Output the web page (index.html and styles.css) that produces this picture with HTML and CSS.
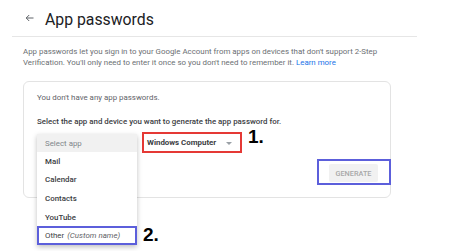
FILE: index.html
```html
<!DOCTYPE html>
<html lang="en">
<head>
    <meta charset="UTF-8">
    <title>App passwords</title>
    <link rel="stylesheet" href="styles.css">
</head>
<body>
    <div class="page">
        <header class="top">
            <svg class="back" width="9" height="8" viewBox="0 0 9 8">
                <path d="M8.5 4H1.2M4.2 1L1.2 4l3 3" fill="none" stroke="#5f6368" stroke-width="1"/>
            </svg>
            <h1>App passwords</h1>
        </header>

        <p class="intro">App passwords let you sign in to your Google Account from apps on devices that don't support 2-Step Verification. You'll only need to enter it once so you don't need to remember it. <a href="#">Learn more</a></p>

        <section class="card">
            <p class="empty">You don't have any app passwords.</p>
            <p class="prompt">Select the app and device you want to generate the app password for.</p>

            <div class="pickers">
                <div class="picker">Select app</div>
                <div class="picker device">
                    Windows Computer
                    <span class="caret"></span>
                </div>
                <span class="note">1.</span>
            </div>

            <div class="actions">
                <div class="mark-blue">
                    <button class="generate">GENERATE</button>
                </div>
            </div>

            <ul class="menu">
                <li class="placeholder">Select app</li>
                <li>Mail</li>
                <li>Calendar</li>
                <li>Contacts</li>
                <li>YouTube</li>
                <li class="picked">Other <em>(Custom name)</em><span class="note note-two">2.</span></li>
            </ul>
        </section>
    </div>
</body>
</html>
```

FILE: styles.css
```css
html, body {
    min-height: 251px;
}

body {
    margin: 0;
    font-family: Roboto, "Liberation Sans", sans-serif;
    background-color: #fff;
    color: #3c4043;
}

.page {
    width: 405px;
    min-height: 251px;
    margin-left: 12px;
}

.top {
    display: flex;
    align-items: center;
    height: 36px;
    border-bottom: 1px solid #e6e6e6;
}

.back {
    margin-left: 13px;
    margin-right: 11px;
}

.top h1 {
    margin: 0;
    font-size: 15.8px;
    font-weight: 400;
    color: #202124;
    padding-top: 2px;
}

.intro {
    margin: 10px 0 0 11px;
    width: 370px;
    font-size: 7.9px;
    line-height: 10.5px;
    color: #6b6f73;
}

.intro a {
    color: #1a73e8;
    text-decoration: none;
}

.card {
    position: relative;
    margin: 13px 0 0 11px;
    width: 368px;
    box-sizing: border-box;
    padding: 10px 13px 12px;
    border: 1px solid #e3e3e3;
    border-radius: 6px;
}

.card p {
    margin: 0;
    font-size: 7.9px;
    line-height: 12px;
}

.empty {
    color: #5f6368;
}

.card .prompt {
    margin-top: 12px;
    font-weight: 500;
    color: #3c4043;
}

.pickers {
    position: relative;
    display: flex;
    gap: 5px;
    margin-top: 4px;
}

.picker {
    width: 100px;
    height: 21px;
    box-sizing: border-box;
    display: flex;
    align-items: center;
    padding-left: 9px;
    font-size: 7.9px;
    color: #80868b;
}

.device {
    position: relative;
    border: 2px solid #e53935;
    padding-left: 3px;
    font-weight: 700;
    color: #3c4043;
}

.caret {
    position: absolute;
    right: 8px;
    top: 8px;
    border-left: 3px solid transparent;
    border-right: 3px solid transparent;
    border-top: 3px solid #9aa0a6;
}

.note {
    font-family: "Liberation Sans", Arial, sans-serif;
    font-weight: 700;
    font-size: 19px;
    line-height: 1;
    color: #000;
}

.pickers .note {
    position: absolute;
    left: 211px;
    top: -5px;
}

.actions {
    display: flex;
    justify-content: flex-end;
    margin: 6px -14px 0 0;
}

.mark-blue {
    border: 2px solid #5c5fdb;
    padding: 3px 11px 1px 10px;
    width: 74px;
    height: 26px;
    box-sizing: border-box;
}

.generate {
    display: block;
    width: 49px;
    height: 18px;
    border: none;
    border-radius: 2px;
    background-color: #f1f1f1;
    color: #a8a8a8;
    font-family: Roboto, sans-serif;
    font-size: 7.3px;
    font-weight: 500;
    padding: 0;
}

.menu {
    position: absolute;
    left: 13px;
    top: 52px;
    z-index: 2;
    width: 100px;
    margin: 0;
    padding: 0;
    list-style: none;
    background-color: #fff;
    box-shadow: 0 2px 5px rgba(0, 0, 0, 0.25);
}

.menu li {
    position: relative;
    height: 18.6px;
    box-sizing: border-box;
    display: flex;
    align-items: center;
    padding-left: 8px;
    font-size: 7.9px;
    font-weight: 500;
    color: #3c4043;
}

.menu .placeholder {
    height: 18px;
    background-color: #f1f1f1;
    font-weight: 400;
    color: #80868b;
}

.menu .picked {
    border: 2px solid #5c5fdb;
    padding-left: 6px;
    font-weight: 400;
}

.menu em {
    margin-left: 3px;
    color: #5f6368;
}

.note-two {
    position: absolute;
    left: 104px;
    top: -3px;
}
```
